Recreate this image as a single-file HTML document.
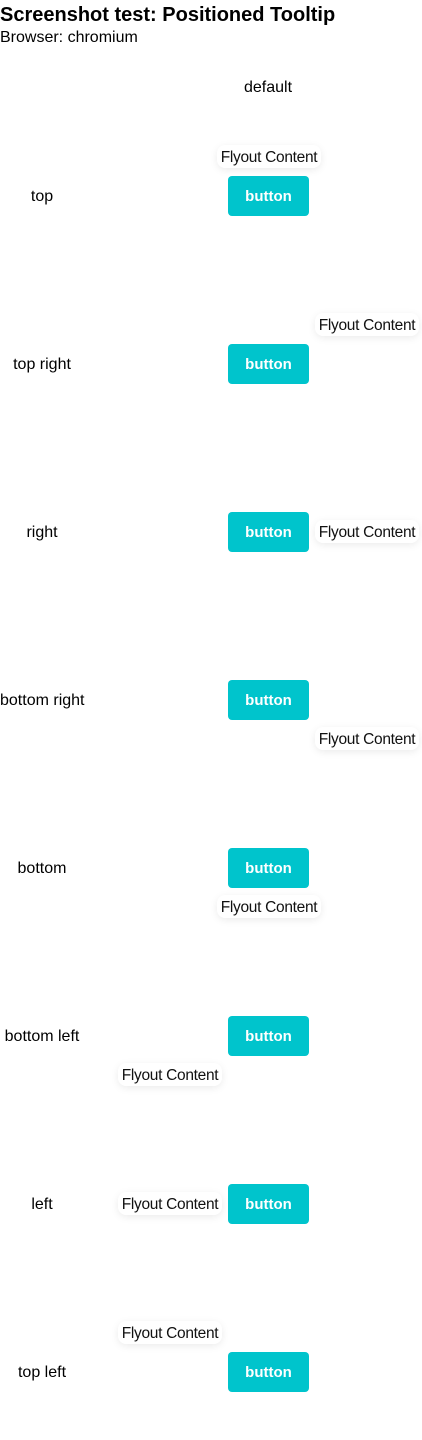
<!DOCTYPE html>
<html><head><meta charset="utf-8"><style>
*{margin:0;padding:0;box-sizing:border-box}
body{width:422px;height:1440px;background:#fff;font-family:"Liberation Sans",sans-serif;color:#000;position:relative;overflow:hidden}
h1{position:absolute;left:0;top:4px;font-size:20px;font-weight:bold;line-height:22px;white-space:nowrap}
.sub{position:absolute;left:0;top:29px;font-size:16px;line-height:18px}
.lab{position:absolute;width:84px;text-align:center;font-size:16px;line-height:18px;white-space:nowrap;left:0}
.btn{position:absolute;left:228px;width:81px;height:40px;background:#00c4cc;border-radius:4px;color:#fff;font-weight:bold;font-size:15px;line-height:42px;text-align:center}
.fly{position:absolute;width:104px;height:23px;background:#fff;border-radius:8px;box-shadow:0 2px 8px rgba(0,0,0,0.08);font-size:15.5px;line-height:25px;text-align:center;white-space:nowrap;letter-spacing:-0.3px;color:#111}
</style></head><body>
<h1>Screenshot test: Positioned Tooltip</h1>
<div class="sub">Browser: chromium</div>
<div class="lab" style="left:226px;width:84px;top:79px">default</div>

<div class="lab" style="top:188px">top</div>
<div class="btn" style="top:176px">button</div>
<div class="fly" style="left:217px;top:145px">Flyout Content</div>

<div class="lab" style="top:356px">top right</div>
<div class="btn" style="top:344px">button</div>
<div class="fly" style="left:315px;top:313px">Flyout Content</div>

<div class="lab" style="top:524px">right</div>
<div class="btn" style="top:512px">button</div>
<div class="fly" style="left:315px;top:520px">Flyout Content</div>

<div class="lab" style="top:692px">bottom right</div>
<div class="btn" style="top:680px">button</div>
<div class="fly" style="left:315px;top:727px">Flyout Content</div>

<div class="lab" style="top:860px">bottom</div>
<div class="btn" style="top:848px">button</div>
<div class="fly" style="left:217px;top:895px">Flyout Content</div>

<div class="lab" style="top:1028px">bottom left</div>
<div class="btn" style="top:1016px">button</div>
<div class="fly" style="left:118px;top:1063px">Flyout Content</div>

<div class="lab" style="top:1196px">left</div>
<div class="btn" style="top:1184px">button</div>
<div class="fly" style="left:118px;top:1192px">Flyout Content</div>

<div class="lab" style="top:1364px">top left</div>
<div class="btn" style="top:1352px">button</div>
<div class="fly" style="left:118px;top:1321px">Flyout Content</div>
</body></html>
